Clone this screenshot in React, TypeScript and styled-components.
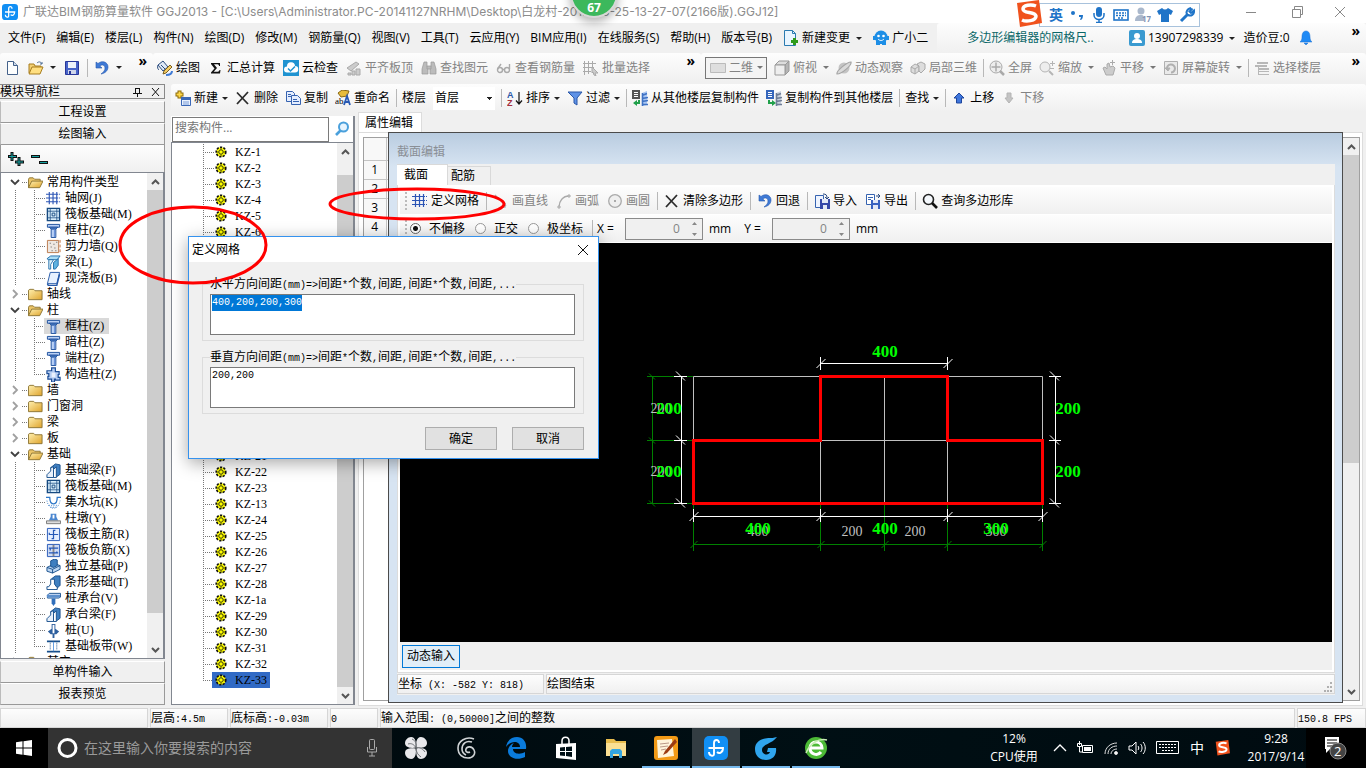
import React, { useEffect, useRef } from 'react';
import styled, { createGlobalStyle, css } from 'styled-components';

const UI = '"Open Sans", "Noto Sans CJK SC", sans-serif';
const SONG = '"Liberation Serif", "Noto Sans CJK SC", serif';
const EDGE = '#828790';

const Global = createGlobalStyle`
  * { box-sizing: border-box; }
  body { margin: 0; overflow: hidden; font: 12px/16px ${UI}; color: #000; }
  button, input, select, textarea { font: inherit; color: inherit; margin: 0; padding: 0; border-radius: 0; }
  button { border: 0; background: none; white-space: nowrap; }
  svg { display: block; flex: none; }
`;

/* ---------- icons ---------- */

const column = (
  <g stroke="#1c4f9c" fill="#b9d0f5"><path d="M1.5 1.5h13v3h-13z" /><path d="M3.5 4.5h9l-2 2h-5z" fill="#6c97dd" /><path d="M5.5 6.5h5v9h-5z" /><path d="M9 7v8" stroke="#5f8ad8" /></g>
);
const raft = (
  <g stroke="#174a80" fill="none"><path d="M1.500 1.500h13v13h-13z" fill="#d8eefb" strokeWidth="1.500" /><path d="M4.500 2v12M11.500 2v12M2 4.500h12M2 11.500h12" strokeWidth=".8" /><path d="M6.500 6.500h3v3h-3z" /></g>
);
const beamFooting = (
  <g stroke="#174f8c"><path d="M5 5l5-4 5 1v10l-4 3z" fill="#3f7fc0" /><path d="M1 15.500v-3l4-4V5l3-1v11.500z" fill="#e8f1fc" /><path d="M8 15.500V7l3-3v11.500z" fill="#fff" /></g>
);

const icons: Record<string, React.ReactNode> = {
  newFile: <><path d="M3.500 1.500h6l4 4v9h-10z" fill="#fdfefe" stroke="#44618a" /><path d="M9.500 1.500v4h4" fill="#cfdcec" stroke="#44618a" /></>,
  open: <><path d="M1 13V4h5l1 2h6v3" fill="#f2cf72" stroke="#a77d1e" /><path d="M1 14l3-7h11l-3 7z" fill="#ffdf80" stroke="#a77d1e" /><path d="M9 3c2-2 4-1 5 1m0-2v2h-2" fill="none" stroke="#4c6c94" /></>,
  save: <><path d="M1.500 1.500h13v13h-13z" fill="#4763c8" stroke="#28369a" /><path d="M4 2h8v6H4z" fill="#eef2fb" /><path d="M4 10h8v4H4z" fill="#cfd6ea" /><path d="M5 11h2v3H5z" fill="#28369a" /></>,
  undo: <path d="M2 2v6h6L5.800 6C8 4 11 5 11 8c0 2-1 4-4 6 5-1 7-4 7-7 0-5-6-7-10-3.500z" fill="#3f7ad6" stroke="#2558ad" strokeWidth=".6" />,
  paint: <><path d="M1 5l5-4 5 6-5 4z" fill="#dfe9f6" stroke="#2b4c7e" /><path d="M4 5l4 4" stroke="#2b4c7e" /><path d="M1 5c-1 3 0 4 1 5" stroke="#2b4c7e" fill="none" /><path d="M13 5l2 2-6 6-3 1 1-3z" fill="#f3cb63" stroke="#7b6020" /><path d="M9 15c3 0 6-1 6-4" stroke="#3f7ad6" fill="none" strokeWidth="2" /></>,
  sigma: <path d="M3 3h9v3h-1c0-1-.5-1.700-1.500-1.700H6L9 8l-3.300 3.700h4c1 0 1.600-.7 1.800-1.700h1l-.5 3.500H3v-1L6.500 8.500 3 4z" fill="#111" />,
  cloud: <><path d="M0 0h16v16H0z" fill="#1f93d1" /><path d="M4 12.500a3 3 0 0 1 0-6 4 4 0 0 1 8-.5 3 3 0 0 1 0 6.500z" fill="#fff" /><path d="M5 8.500l2.500 2.500L12 6.500" stroke="#1f93d1" fill="none" strokeWidth="1.500" /></>,
  align: <g fill="#ccc" stroke="#aaa"><path d="M1 8l9-6 3 2-8 7z" /><path d="M2 13h3v2H2zM6 11h3v4H6zM10 9h4v6h-4z" /></g>,
  binoc: <g fill="#bcbcbc" stroke="#999" strokeWidth=".7"><path d="M3 2h3v4l1 2v6H1V9zM13 2h-3v4L9 8v6h6V9z" /><path d="M6 6h4v3H6z" /></g>,
  glasses: <g fill="none" stroke="#aaa" strokeWidth="1.400"><circle cx="4" cy="10" r="2.500" /><circle cx="11" cy="10" r="2.500" /><path d="M6.500 9.500h2M1.500 9L5 4M13.500 9V4" /></g>,
  batch: <g fill="none" stroke="#aaa"><path d="M1.500 1v14M5.500 1v13M9.500 1v8M0 3.500h13M0 7.500h11M0 11.500h8" /><path d="M9 7l6 6h-3l1 3-2-1-1-3-1 1z" fill="#ccc" /></g>,
  rect: <path d="M.5 3.500h15v9H.5z" fill="#dedede" stroke="#bbb" />,
  cube: <g stroke="#999" fill="#ddd"><path d="M1 5l4-4h10l-4 4z" /><path d="M11 5l4-4v10l-4 4z" fill="#b5b5b5" /><path d="M1 5h10v10H1z" fill="#eee" /></g>,
  orbit: <g><circle cx="8" cy="8" r="5.500" fill="#c4c4c4" /><path d="M1 14c-1-3 10-12 14-12 1 3-9 12-14 12z" fill="#dadada" stroke="#a5a5a5" strokeWidth="1.200" /></g>,
  local3d: <g fill="#ddd" stroke="#aaa"><path d="M1 7l4-3 4 2v5l-4 3-4-2z" /><path d="M7 4l4-2 4 2v5l-4 4-2-2V6z" /><path d="M1 7l4 2 4-3M5 9v5" fill="none" /></g>,
  full: <g fill="none" stroke="#aaa"><circle cx="7" cy="7" r="6" fill="#ededed" /><path d="M7 2.500v9M2.500 7h9" strokeWidth="1.500" /><path d="M11 11l4 4" strokeWidth="2.500" /></g>,
  zoomer: <g fill="none" stroke="#b5b5b5"><circle cx="6" cy="7" r="5" fill="#ededed" /><path d="M10 11l4 4" strokeWidth="2" /><path d="M13.500 1v5M11 3.500h5M11 8.500h4" /></g>,
  hand: <g fill="#ccc" stroke="#aaa"><path d="M2 8l2-1 2 2V4l2-1 1 4 3-1 2 2-2 7H5z" /><path d="M11.500 0v5M9 2.500h5" /></g>,
  rotate: <g fill="none" stroke="#b0b0b0"><path d="M1.500 1.500h13v13h-13z" fill="#eaeaea" /><path d="M4 9a4 4 0 1 1 4 3.500" strokeWidth="2" /><path d="M2 8h5l-2 3z" fill="#b0b0b0" /></g>,
  floors: <path d="M3 2h11v2H3zM1 5h12v2H1zM4 8h11v2H4zM4 11h11v1H4zM4 14h11v1H4zM4 5h1v10H4z" fill="#b8b8b8" />,
  create: <><path d="M4.500.5v8M.5 4.500h8" stroke="#8b6a08" strokeWidth="4" /><path d="M4.500 1.500v6M1.500 4.500h6" stroke="#ffd84a" strokeWidth="2" /><path d="M6.500 7.500h9v8h-9z" fill="#eaf2ff" stroke="#3a68b8" /><path d="M6 7h10v3H6z" fill="#3a68b8" /><path d="M8 12h6M8 14h6" stroke="#7b9cd6" /></>,
  cross: <path d="M2 2.500L13 14M13 2L2 14" stroke="#2c2c2c" strokeWidth="1.800" fill="none" />,
  copy: <g fill="#e5eeff" stroke="#3663b0"><path d="M1.500 1.500h6l2 2v8h-8z" /><path d="M6.500 5.500h6l3 3v6h-9z" /><path d="M8 9.500h4M8 11.500h6M3 4.500h3M3 6.500h3" /></g>,
  rename: <><path d="M3 3l4-3 7 1-2 5-6 1z" fill="#e7bc3c" stroke="#896815" /><text x="0" y="14" fontSize="9" fontFamily="Liberation Serif">ab</text><path d="M9 15l3-9 3 9M10 12h4" stroke="#2859b4" fill="none" strokeWidth="1.800" /></>,
  filter: <path d="M1 2h14L10 8v7l-3-2V8z" fill="#5f92e6" stroke="#2a57a8" />,
  sort: <><text x="0" y="8" fontSize="9" fontWeight="700" fill="#2a57a8" fontFamily="Liberation Sans">A</text><text x="0" y="16" fontSize="9" fontWeight="700" fill="#a12d3c" fontFamily="Liberation Sans">Z</text><path d="M12 2v11M9 10.500l3 3.500 3-3.500" stroke="#111" strokeWidth="1.200" fill="none" /></>,
  fromFloor: <><path d="M0 0h8v9H0z" fill="#555" /><path d="M2 2.500h4M2 4.500h4M2 6.500h4" stroke="#fff" /><path d="M10 3l5-2v14l-5 1z" fill="#a9c6f2" /><path d="M10 5.500l5-2M10 8.500l6-1M10 11.500l6-1M10 14.500h6M10.500 3v13" stroke="#3f72c4" strokeWidth="1.600" fill="none" /><path d="M8 10v4H5v2l-4-3 4-3v2h1v-2z" fill="#20a04a" /></>,
  toFloor: <><path d="M0 0h8v9H0z" fill="#3566bb" /><path d="M2 2.500h4M2 4.500h4M2 6.500h4" stroke="#fff" /><path d="M10 3l5-2v14l-5 1z" fill="#c9d1dd" /><path d="M10 5.500l5-2M10 8.500l6-1M10 11.500l6-1M10 14.500h6M10.500 3v13" stroke="#6d7c96" strokeWidth="1.600" fill="none" /><path d="M2 10h2v2h2v-2l4 3-4 3v-2H2z" fill="#20a04a" /></>,
  up: <path d="M8 3l5 5h-2.500v5h-5V8H3z" fill="#3f76dc" stroke="#1e469c" />,
  down: <path d="M8 13l4-5h-2V3H6v5H4z" fill="#c4c4c4" stroke="#b4b4b4" />,
  change: <><path d="M1.500.5h8l3 3v12h-11z" fill="#e9f5ff" stroke="#2a7ab0" /><path d="M9.500.5v3h3" fill="none" stroke="#2a7ab0" /><path d="M11.500 8v7M8 11.500h7" stroke="#2f9b1b" strokeWidth="3" /></>,
  robot: <><circle cx="8" cy="7" r="6.500" fill="#1d8ee6" /><path d="M0 6h3v4H0zM13 6h3v4h-3zM3 11h10v4H9v-1H7v1H3z" fill="#1d8ee6" /><circle cx="5.500" cy="6" r="1.300" fill="#fff" /><circle cx="10.500" cy="6" r="1.300" fill="#fff" /><path d="M5 9c2 2 4 2 6 0" stroke="#fff" fill="none" /></>,
  user: <><rect width="16" height="16" rx="2" fill="#3a9ad0" /><circle cx="8" cy="6" r="3" fill="#fff" /><path d="M3 13c0-3 2-4 5-4s5 1 5 4z" fill="#fff" /></>,
  bell: <path d="M8 1c-3 0-4 3-4 6s-1 4-2 5h12c-1-1-2-2-2-5s-1-6-4-6zM6 13h4l-2 2z" fill="#1f8af5" stroke="#1b6fd0" strokeWidth=".5" />,
  grid: <path d="M3.500 1v14M7.500 1v14M11.500 1v14M0 3.500h15M0 7.500h15M0 11.500h15" stroke="#2c55b5" strokeWidth="1.200" fill="none" strokeDasharray="13 1 2" />,
  line: <path d="M2 2l11 11M12 10v4h-4" stroke="#aaa" strokeWidth="1.300" fill="none" />,
  arc: <g stroke="#aaa" fill="none"><path d="M3 14C3 8 7 3 13 3" strokeWidth="1.300" /><path d="M2 13h2v2H2zM12 2h2v2h-2z" fill="#ddd" /></g>,
  circle: <><circle cx="8" cy="8" r="6.300" fill="#efefef" stroke="#aaa" strokeWidth="1.300" /><path d="M7 7h2v2H7z" fill="#aaa" /></>,
  importer: <><path d="M1.500 2.500h8v12h-8z" fill="#eef4ff" stroke="#3663b0" /><path d="M6 6h10v10H6z" fill="#3648a8" /><path d="M8 6h6v4H8zM9 12h4v4H9z" fill="#e4e9f7" /><path d="M9 1c3 0 4 1 4 4m-2-1l2 2 2-2" stroke="#27477e" fill="none" /></>,
  exporter: <><path d="M1.500 1.500h8v10h-8z" fill="#fff" stroke="#3663b0" /><path d="M6 7h9v9H6z" fill="#3a62c0" /><path d="M8 7h5v3H8zM8 12h5v4H8z" fill="#e4e9f7" /><path d="M3 4.500h5M3 6.500h3" stroke="#3663b0" /><path d="M11 3h4m-2-2l2 2-2 2" stroke="#27477e" fill="none" /></>,
  find: <><circle cx="6.500" cy="6.500" r="5" fill="#f4f8fc" stroke="#222" strokeWidth="1.600" /><path d="M10 10l5 5" stroke="#111" strokeWidth="2.600" /></>,
  magnify: <><circle cx="9.500" cy="6" r="4.500" fill="#e6f4ff" stroke="#4aa0dc" strokeWidth="2" /><path d="M6.500 9.500L2 14" stroke="#4aa0dc" strokeWidth="2.600" /></>,
  folder: <path d="M.5 13.500v-10L2 2.500h4l1.500 1.500H15v9.500z" fill="url(#gold)" stroke="#8c7434" />,
  folderOpen: <><path d="M.5 13.500v-9l1-1.500h4l1.500 1.500h6v3" fill="#ecc568" stroke="#8c7434" /><path d="M.5 13.500l3.500-7h12l-3.500 7z" fill="url(#gold)" stroke="#8c7434" /></>,
  column, raft, beamFooting,
  wall: <><path d="M1.500 1.500h12v13h-12z" fill="#eee8e2" stroke="#b9784a" /><path d="M4 4h1v1H4zM8 5h1v1H8zM5 8h1v1H5zM9 9h1v1H9zM6 12h1v1H6zM10 12h1v1h-1zM11 3h1v1h-1z" fill="#555" /><path d="M15 1v14" stroke="#c2703c" strokeDasharray="3 2" /></>,
  beam: <g stroke="#2470ac" fill="#a9dcf5"><path d="M1 4l4-3h10l-3 4H3z" /><path d="M3 5h5l-3 5v5H3z" fill="#e3f4fd" /><path d="M8 8l5-4v7l-3 4H8z" fill="#5fb2e0" /></g>,
  slab: <><path d="M4.500 1.500h10l-3 12h-10z" fill="#e7f1ff" stroke="#2458a8" /><path d="M1.500 13.500l1 2h9l3-12" fill="none" stroke="#2458a8" strokeWidth="1.500" /></>,
  gear: <><path d="M6 1h4v4h4v3h-1v3h2v3h-5v-1H9v3H6v-3H2v-3h1V7H1V4h5z" fill="#b6cdf2" stroke="#1e4f98" strokeWidth="1.300" /><path d="M6 6h4v5H6z" fill="#e9f1fd" /></>,
  sump: <g fill="none" stroke="#2f78c8"><path d="M0 2.500h4c0 5 1 7 4 7s4-2 4-7h4" strokeWidth="1.400" /><path d="M1 6c1 5 3 8 7 8s6-3 7-8M3 11h10M5 13h6" strokeDasharray="1 1.500" /></g>,
  pier: <><path d="M5 6V3h6v3l2 4H3z" fill="#4a86cf" /><path d="M7 4h2v4H7z" fill="#fff" /><path d="M.5 10.500h15v3H.5z" fill="#ddd" stroke="#777" /></>,
  rebar: <g fill="none" stroke="#2458b8"><path d="M1.500 1.500h13v13h-13z" fill="#e3edff" /><path d="M8 3v10M3 8h10M8 3.500h2M8 12.500H6M3.500 8V6" strokeWidth="1.300" /></g>,
  rebarNeg: <g fill="none" stroke="#2458b8"><path d="M1.500 1.500h13v13h-13z" fill="#cfdcf4" /><path d="M8 2v12" stroke="#888" strokeWidth="2" /><path d="M3 5.500h10M3 10.500h10M4.500 6v2M11.500 11V9" strokeWidth="1.300" /></g>,
  isolated: <g stroke="#174f8c"><path d="M1 9l8-4 6 2v4l-8 4-6-2z" fill="#bcd6f2" /><path d="M1 9l6 2 8-4M7 11v4" fill="none" /><path d="M5 2l4-2 3 1v6l-4 2-3-1z" fill="#3f7fc0" /></g>,
  strip: <g stroke="#174f8c"><path d="M6 4l4-3h5v10l-4 4z" fill="#3f7fc0" /><path d="M1 15.500v-3h2l2-3V4.500h4v5l2 3h1v3z" fill="#fff" /></g>,
  cap: <><path d="M1.500 4.500l2-2h12v4l-2 1h-12z" fill="#dbe9fb" stroke="#174f8c" /><path d="M1 4h14v3H1z" fill="#5c8fcd" /><path d="M6 8h4v5l-2 3-2-3z" fill="#2f6ebb" /></>,
  pile: <><path d="M6 1h4v5l4 3-3 3H9v4H7v-4H5L2 9l4-3z" fill="#2d5f9e" /><path d="M7 2h2v9H7z" fill="#fff" /></>,
  band: <g fill="none" stroke="#174f8c"><path d="M1 2.500h14M1 13.500h14" strokeWidth="1.800" /><path d="M4.500 4v8M11.500 4v8" strokeDasharray="1 1" /><path d="M8 3v10" stroke="#5d9ae0" /></g>,
  kz: <g><circle cx="8" cy="8" r="4.800" fill="#ff0" stroke="#111" strokeWidth="1.600" strokeDasharray="2.200 1.300" /><circle cx="8" cy="8" r="2.200" fill="none" stroke="#111" strokeWidth=".8" /><path d="M8 3.500v2M8 10.500v2M3.500 8h2M10.500 8h2" stroke="#111" strokeWidth=".8" /></g>,
};

const Icon = ({ name, size = 16 }: { name: string; size?: number }) => (
  <svg width={size} height={size} viewBox="0 0 16 16" aria-hidden="true">{icons[name]}</svg>
);

/* ---------- shared text ---------- */

const Half = styled.span`font: 10px/16px "Liberation Mono", monospace;`;
/* Full-width characters take 12px cells, half-width ones 6px cells. */
const Cells = ({ text }: { text: string }) => (
  <>{text.split(/([\x20-\x7e]+)/).map((p, i) => (i % 2 ? <Half key={i}>{p}</Half> : p))}</>
);

/* ---------- frame ---------- */

const Page = styled.div`
  position: relative; display: flex; flex-direction: column; height: 100vh; min-width: 1024px;
  background: #f0f0f0; overflow: hidden;
`;
const TitleBar = styled.header`
  display: flex; align-items: center; gap: 5px; height: 23px; padding-left: 2px; background: #fff; color: #8c8c8c; white-space: pre;
  font-family: Inter, "Noto Sans CJK SC", sans-serif;
`;
const WinControls = styled.div`display: flex; gap: 28px; margin-left: auto; padding-right: 20px;`;
const Bars = styled.div`display: flex; flex-direction: column;`;
const Strip = styled.div<{ $h: number }>`display: flex; height: ${p => p.$h}px; white-space: nowrap;`;
const Group = styled.div<{ $w?: number; $flat?: boolean; $gap?: number }>`
  display: flex; align-items: center; gap: ${p => p.$gap ?? 8}px; padding: 0 5px 0 4px;
  ${p => (p.$w ? css`flex: 0 0 ${p.$w}px; width: ${p.$w}px;` : css`flex: 1; min-width: 0;`)}
  background: ${p => (p.$flat ? 'none' : 'linear-gradient(#fdfdfd, #f0f0f0)')};
  border-radius: 3px;
`;
const MenuGroup = styled(Group)`padding-left: 8px;`;
const MenuItem = styled.button`height: 20px;`;
const ToolButton = styled.button<{ $gray?: boolean }>`
  display: flex; align-items: center; gap: 3px; height: 22px; flex: none; color: ${p => (p.$gray ? '#838383' : '#000')};
`;
const Arrow = styled.i<{ $near?: boolean; $gray?: boolean }>`
  flex: none; margin-left: ${p => (p.$near ? 1 : 3)}px; border: 3px solid transparent; border-top-color: ${p => (p.$gray ? '#777' : '#222')}; border-bottom: 0;
`;
const Sep = styled.i`flex: none; width: 1px; height: 18px; margin: 0 -2px 0 -1px; background: #b8b8b8;`;
const More = styled.button`align-self: flex-start; height: 16px; padding: 0 1px; margin-left: auto; font-weight: 700; font-size: 14px; line-height: 14px;`;
const Notice = styled.a`flex: 1; text-align: center; color: #0b6768; text-decoration: none;`;
const ViewPick = styled(ToolButton)`border: 1px solid #777; padding: 0 4px; width: 62px; background: #f4f4f4;`;
const Combo = styled.select`
  appearance: none; width: 62px; height: 23px; border: 0; padding-left: 2px; color: #000;
  background: linear-gradient(#222, #222) no-repeat 54px 10px / 5px 1px, linear-gradient(#222, #222) no-repeat 55px 11px / 3px 1px,
    linear-gradient(#222, #222) no-repeat 56px 12px / 1px 1px, #fff;
`;

type ToolProps = { icon?: string; label?: string; gray?: boolean; arrow?: boolean | 'near'; title?: string };
const Tool = ({ icon, label, gray, arrow, title }: ToolProps) => (
  <ToolButton type="button" $gray={gray} title={title} aria-label={label ?? title}>
    {icon && <Icon name={icon} />}{label}{arrow && <Arrow $near={arrow === 'near'} $gray={gray} />}
  </ToolButton>
);

const Body = styled.main`display: flex; flex: 1; gap: 6px; min-height: 0; padding-top: 2px;`;

/* ---------- navigation column ---------- */

const Nav = styled.aside`display: flex; flex-direction: column; flex: 0 0 165px; padding-bottom: 1px;`;
const NavHead = styled.div`
  display: flex; align-items: center; justify-content: space-between; height: 15px; margin-bottom: 2px; padding-right: 4px;
  border: 1px solid #888; border-left: 0;
`;
const NavTools = styled.div`display: flex; gap: 9px;`;
const NavButton = styled.button`
  flex: none; height: 22px; border: 1px solid #999; border-top-color: #fff; border-left-color: #bbb; background: #f0f0f0; text-align: center;
`;
const NavBar = styled.div`
  display: flex; align-items: center; gap: 7px; height: 27px; padding-left: 6px;
  border: 1px solid #999; border-width: 0 1px; background: linear-gradient(#fdfdfd, #f0f0f0);
`;
const TreeBox = styled.div`display: flex; flex: 1; min-height: 0; border: 1px solid ${EDGE}; border-right-width: 2px; background: #fff;`;
const NavTree = styled(TreeBox)`margin-bottom: 2px;`;
const TreeList = styled.ul`flex: 1; min-width: 0; margin: 0; padding: 1px 0 0; list-style: none; overflow: hidden; font-family: ${SONG}; white-space: nowrap;`;

const dotsV = 'repeating-linear-gradient(#777 0 1px, transparent 1px 2px)';
const dotsH = 'repeating-linear-gradient(90deg, #777 0 1px, transparent 1px 2px)';

const FolderRow = styled.li`
  display: flex; align-items: center; gap: 4px; height: 16px; padding-left: 9px;
  background: ${dotsH} no-repeat 21px 8px / 5px 1px;
`;
const LeafRow = styled.li<{ $last?: boolean }>`
  display: flex; align-items: center; height: 16px; padding-left: 43px;
  background: ${dotsV} no-repeat 14px 0 / 1px 16px, ${dotsV} no-repeat 33px 0 / 1px ${p => (p.$last ? 8 : 16)}px,
    ${dotsH} no-repeat 33px 8px / 11px 1px;
`;
const LeafLabel = styled.span<{ $on?: boolean }>`
  display: flex; align-items: center; gap: 4px; height: 16px; padding: 0 5px 0 2px; background: ${p => (p.$on ? '#d9d9d9' : 'none')};
`;
const Chevron = ({ open }: { open: boolean }) => (
  <svg width="10" height="10" viewBox="0 0 10 10">
    <path d={open ? 'M1 3l4 4 4-4' : 'M3 1l4 4-4 4'} fill="none" stroke={open ? '#404040' : '#a0a0a0'} strokeWidth="1.800" />
  </svg>
);

const ScrollTrack = styled.div`display: flex; flex-direction: column; flex: none; width: 16px; margin-left: auto; background: #f0f0f0;`;
const ScrollArrow = styled.button`display: grid; place-items: center; flex: none; width: 100%; height: 17px;`;
const Thumb = styled.div<{ $before: number; $after: number }>`flex: 1; margin: ${p => p.$before}px 0 ${p => p.$after}px; background: #cdcdcd;`;
const Scroll = ({ before = 0, after = 0 }: { before?: number; after?: number }) => (
  <ScrollTrack>
    <ScrollArrow aria-label="上"><svg width="9" height="6"><path d="M1 5l3.500-3.500L8 5" fill="none" stroke="#555" strokeWidth="2" /></svg></ScrollArrow>
    <Thumb $before={before} $after={after} />
    <ScrollArrow aria-label="下"><svg width="9" height="6"><path d="M1 1l3.500 3.500L8 1" fill="none" stroke="#555" strokeWidth="2" /></svg></ScrollArrow>
  </ScrollTrack>
);

type Leaf = [icon: string, label: string, on?: boolean];
const tree: { label: string; leaves?: Leaf[] }[] = [
  { label: '常用构件类型', leaves: [['grid', '轴网(J)'], ['raft', '筏板基础(M)'], ['column', '框柱(Z)'], ['wall', '剪力墙(Q)'], ['beam', '梁(L)'], ['slab', '现浇板(B)']] },
  { label: '轴线' },
  { label: '柱', leaves: [['column', '框柱(Z)', true], ['column', '暗柱(Z)'], ['column', '端柱(Z)'], ['gear', '构造柱(Z)']] },
  { label: '墙' }, { label: '门窗洞' }, { label: '梁' }, { label: '板' },
  {
    label: '基础',
    leaves: [['beamFooting', '基础梁(F)'], ['raft', '筏板基础(M)'], ['sump', '集水坑(K)'], ['pier', '柱墩(Y)'], ['rebar', '筏板主筋(R)'], ['rebarNeg', '筏板负筋(X)'],
      ['isolated', '独立基础(P)'], ['strip', '条形基础(T)'], ['cap', '桩承台(V)'], ['beamFooting', '承台梁(F)'], ['pile', '桩(U)'], ['band', '基础板带(W)']],
  },
  { label: '其它' },
];

const Navigation = () => (
  <Nav>
    <NavHead>模块导航栏
      <NavTools>
        <svg width="9" height="10" fill="none" stroke="#111"><path d="M2.500 1v5M6.500 1v5M2 1.500h5M0 6.500h9M4.500 7v3" /></svg>
        <svg width="9" height="10" stroke="#111"><path d="M1 1l7 8M8 1L1 9" /></svg>
      </NavTools>
    </NavHead>
    <NavButton>工程设置</NavButton>
    <NavButton>绘图输入</NavButton>
    <NavBar>
      <svg width="17" height="16" fill="none"><path d="M5 1v9M1 5.500h9M12 6v9M8 11h9" stroke="#111" strokeWidth="3" /><path d="M5 2v7M2 5.500h7M12 7v7M9 11h7" stroke="#14a0a0" strokeWidth="1" /></svg>
      <svg width="17" height="16"><path d="M0 4h9v3H0zM8 10h9v3H8z" fill="#111" /><path d="M1 5h7v1H1zM9 11h7v1H9z" fill="#14a0a0" /></svg>
    </NavBar>
    <NavTree>
      <TreeList>
        {tree.map(n => (
          <React.Fragment key={n.label}>
            <FolderRow><Chevron open={!!n.leaves} /><span /><Icon name={n.leaves ? 'folderOpen' : 'folder'} size={15} />{n.label}</FolderRow>
            {n.leaves?.map(([icon, label, on], i) => (
              <LeafRow key={label} $last={i === n.leaves!.length - 1}>
                <LeafLabel $on={on}><Icon name={icon} size={15} />{label}</LeafLabel>
              </LeafRow>
            ))}
          </React.Fragment>
        ))}
      </TreeList>
      <Scroll after={28} />
    </NavTree>
    <NavButton>单构件输入</NavButton>
    <NavButton>报表预览</NavButton>
  </Nav>
);

/* ---------- component list ---------- */

const Work = styled.section`display: flex; flex-direction: column; flex: 1; min-width: 0;`;
const Split = styled.div`display: flex; flex: 1; gap: 3px; min-height: 0;`;
const ListPanel = styled.div`display: flex; flex-direction: column; flex: 0 0 184px; padding: 4px 0 1px;`;
const SearchRow = styled.div`display: flex; align-items: center; gap: 5px; height: 26px; padding-left: 1px; border-right: 2px solid ${EDGE}; background: #fff;`;
const SearchInput = styled.input`width: 157px; height: 25px; padding: 0 2px 4px; border: 1px solid #7a7a7a; background: #fff; outline: 0; &::placeholder { color: #767676; }`;
const KzRow = styled.li<{ $last?: boolean }>`
  display: flex; height: 16px; padding-left: 40px;
  background: ${dotsV} no-repeat 31px 0 / 1px ${p => (p.$last ? 8 : 16)}px, ${dotsH} no-repeat 31px 8px / 11px 1px;
`;
const KzLabel = styled.span<{ $on?: boolean }>`display: flex; gap: 6px; padding: 0 3px 0 1px; background: ${p => (p.$on ? '#316ac5' : 'none')};`;

const kz = ['1', '2', '3', '4', '5', '6', '7', '8', '9', '10', '11', '12', '14', '15', '16', '17', '18', '19', '20', '21', '22', '23', '13', '24', '25', '26', '27', '28', '1a', '29', '30', '31', '32', '33'];

/* ---------- property pane and section window ---------- */

const PropPane = styled.div`position: relative; display: flex; flex-direction: column; flex: 1; min-width: 0; margin-right: 3px;`;
const PropTab = styled.div`width: 64px; height: 20px; padding: 2px 6px 0; border: 1px solid #dcdcdc; border-bottom: 0; background: #fff; white-space: nowrap;`;
const PropBody = styled.div`display: flex; flex: 1; padding: 4px 2px 4px 4px; min-height: 0; border: 1px solid #dcdcdc; background: #fff;`;
const PropFrame = styled.div`display: flex; flex: 1; border: 1px solid #a0a0a0;`;
const RowTable = styled.table`
  align-self: flex-start; border-collapse: collapse; font-family: ${UI};
  th { width: 22px; height: 19px; padding: 0; border: 1px solid #c4c4c4; border-width: 0 1px 1px 0; background: #f8f8f8; font-weight: 400; }
  thead th { height: 22px; }
  td { width: 300px; border-bottom: 1px solid #d0d0d0; }
`;
const Child = styled.section`
  position: absolute; inset: 20px 20px 3px 30px; display: flex; flex-direction: column; padding: 0 7px 7px 8px;
  border: 1px solid #4b4b4b; background: linear-gradient(#b9cce0, #d7e4f2 34px);
`;
const ChildTitle = styled.h2`height: 31px; margin: 0; padding-top: 11px; font: 12px/16px ${UI}; color: #8a8f96;`;
const Tabs = styled.div`display: flex; align-items: flex-end; height: 21px; background: #f0f0f0;`;
const Tab = styled.button<{ $on?: boolean }>`
  width: ${p => (p.$on ? 51 : 43)}px; height: ${p => (p.$on ? 21 : 19)}px; border: 1px solid #d9d9d9; border-bottom: 0; border-left: 0; text-align: left;
  background: ${p => (p.$on ? '#fff' : '#f0f0f0')};
  padding: 0 0 1px ${p => (p.$on ? 7 : 3)}px;
`;
const TabPage = styled.div`display: flex; flex-direction: column; flex: 1; min-height: 0; padding: 2px; border: 1px solid #dcdcdc; border-top: 0; background: #fff;`;
const ChildBar = styled.div<{ $gap?: number }>`
  display: flex; align-items: center; gap: ${p => p.$gap ?? 8}px; flex: none; height: 27px; padding-left: 5px; margin-bottom: 1px;
  background: linear-gradient(#fdfdfd, #f0f0f0); white-space: nowrap;
`;
const Grip = styled.i`flex: none; width: 2px; height: 18px; margin-right: -3px; background: repeating-linear-gradient(#bbb 0 2px, transparent 2px 4px);`;
const Choice = styled.label`display: flex; align-items: center; gap: 8px; margin-right: 4px;`;
const Radio = styled.input`
  appearance: none; width: 11px; height: 11px; border: 1px solid #666; border-radius: 50%; background: #fff;
  &:checked { background: radial-gradient(#111 0 2px, #fff 3px); }
  &:not(:checked) { border-color: #999; }
`;
const Measure = styled.label`display: flex; align-items: center; gap: 6px; margin-right: 7px;`;
const MeasureName = styled.span`padding-right: 5px;`;
const Spin = styled.span`display: flex; align-items: center; width: 78px; height: 22px; padding-right: 4px; border: 1px solid #8a8a8a; background: #f0f0f0;`;
const SpinInput = styled.input`flex: 1; width: 0; padding-right: 11px; border: 0; background: none; color: #848484; text-align: right; outline: 0;`;
const Canvas = styled.div`flex: 1; min-height: 0; overflow: hidden; background: #000;`;
const Footer = styled.div`display: flex; align-items: center; flex: none; height: 28px; padding-left: 2px; background: #f0f0f0;`;
const DynButton = styled.button`width: 58px; height: 23px; border: 1px solid #0078d7; background: #e1eef8;`;
const ChildStatus = styled.div`display: flex; gap: 2px; height: 22px; padding-top: 1px; background: #f0f0f0;`;
const Cell = styled.div<{ $w?: number }>`
  ${p => (p.$w ? css`flex: 0 0 ${p.$w}px;` : css`flex: 1;`)} height: 20px; padding: 1px 0; overflow: hidden;
  border: 1px solid #d6d6d6; background: linear-gradient(#fdfdfd, #f0f0f0); white-space: pre;
`;
const Resize = styled.svg`margin-left: auto;`;
const CellRow = styled.div`display: flex;`;

const Big = styled.text`font: 700 17px "Liberation Serif", serif; fill: #0f0; text-anchor: middle;`;
const Small = styled.text`font: 14px "Liberation Serif", serif; fill: #c0c0c0; text-anchor: middle;`;

const xs = [693.5, 820.5, 884.5, 947.5, 1042.5];
const ys = [376.5, 440.5, 503.5];
const whiteX = [693.5, 820.5, 947.5, 1042.5];

const Drawing = () => (
  <svg width="932" height="399" viewBox="400 243 932 399" fill="none">
    <g stroke="#c0c0c0">
      <path d="M693.500 376.500H1042.500V503.500H693.500zM820.500 376v128M884.500 376v128M947.500 376v128M693 440.500h350" />
    </g>
    <g stroke="#008000">
      <path d="M652.500 376v128M693 544.500h350" />
      {ys.map(y => <path key={y} d={`M647 ${y}H693M649 ${y - 3}l6 6`} />)}
      {xs.map(x => <path key={x} d={`M${x} 504V551M${x - 3} 548l7-7`} />)}
    </g>
    <Small x="661" y="413">200</Small><Small x="661" y="476">200</Small>
    <Small x="758" y="536">400</Small><Small x="852" y="536">200</Small><Small x="915" y="536">200</Small><Small x="996" y="536">300</Small>
    <g stroke="#fff">
      <path d="M681.500 376v128M1055.500 376v128M693 516.500h350M820 363.500h128" />
      {ys.map(y => <path key={y} d={`M674 ${y}h13M676 ${y - 5}l9 9M1049 ${y}h12M1050 ${y - 5}l9 9`} />)}
      {whiteX.map(x => <path key={x} d={`M${x} 509v13M${x - 4} 521l9-9`} />)}
      {[820.5, 947.5].map(x => <path key={x} d={`M${x} 357v13M${x - 4} 368l9-9`} />)}
    </g>
    <path d="M820.500 376.500H947.500V440.500H1042.500V503.500H693.500V440.500H820.500z" stroke="#f00" strokeWidth="3" />
    <Big x="885" y="357">400</Big>
    <Big x="669" y="414">200</Big><Big x="669" y="477">200</Big><Big x="1068" y="414">200</Big><Big x="1068" y="477">200</Big>
    <Big x="758" y="534">400</Big><Big x="885" y="534">400</Big><Big x="996" y="534">300</Big>
  </svg>
);

const SpinBox = ({ label }: { label: string }) => (
  <Measure><MeasureName>{label}</MeasureName>
    <Spin><SpinInput defaultValue="0" aria-label={label} />
      <svg width="7" height="16" fill="#888"><path d="M1 4L3.500 1 6 4zM1 12l2.500 3L6 12z" /></svg>
    </Spin>mm
  </Measure>
);

const SectionWindow = () => (
  <Child>
    <ChildTitle>截面编辑</ChildTitle>
    <Tabs><Tab $on>截面</Tab><Tab>配筋</Tab></Tabs>
    <TabPage>
      <ChildBar>
        <Grip /><Tool icon="grid" label="定义网格" /><Sep />
        <Tool icon="line" label="画直线" gray /><Tool icon="arc" label="画弧" gray /><Tool icon="circle" label="画圆" gray /><Sep />
        <Tool icon="cross" label="清除多边形" /><Sep /><Tool icon="undo" label="回退" /><Sep />
        <Tool icon="importer" label="导入" /><Tool icon="exporter" label="导出" /><Sep /><Tool icon="find" label="查询多边形库" />
      </ChildBar>
      <ChildBar $gap={6}>
        <Grip />
        <Choice><Radio type="radio" name="offset" defaultChecked />不偏移</Choice>
        <Choice><Radio type="radio" name="offset" />正交</Choice>
        <Choice><Radio type="radio" name="offset" />极坐标</Choice>
        <Sep /><SpinBox label="X =" /><SpinBox label="Y =" />
      </ChildBar>
      <Canvas><Drawing /></Canvas>
      <Footer><DynButton>动态输入</DynButton></Footer>
    </TabPage>
    <ChildStatus>
      <Cell $w={147}><Cells text="坐标 (X: -582 Y: 818)" /></Cell>
      <Cell><CellRow>绘图结束
        <Resize width="10" height="17" fill="#b0b0b0"><path d="M6 6h2v2H6zM3 10h2v2H3zM6 10h2v2H6zM0 14h2v2H0zM3 14h2v2H3zM6 14h2v2H6z" /></Resize>
      </CellRow></Cell>
    </ChildStatus>
  </Child>
);

/* ---------- grid dialog ---------- */

const Dialog = styled.form`
  position: absolute; top: 236px; left: 188px; width: 411px; border: 1px solid #3592ee; background: #f0f0f0;
  box-shadow: 0 4px 16px rgba(0, 0, 0, .35);
`;
const DialogHead = styled.div`display: flex; align-items: center; justify-content: space-between; height: 25px; padding: 0 9px 0 3px; background: #fff;`;
const DialogBody = styled.div`display: flex; flex-direction: column; gap: 8px; padding: 14px 14px 8px 13px;`;
const Field = styled.fieldset`
  height: 65px; margin: 0; padding: 0 8px 0 7px; border: 1px solid #dcdcdc; min-width: 0;
  legend { height: 16px; padding: 0; white-space: nowrap; }
`;
const Area = styled.textarea`
  display: block; width: 100%; height: 41px; margin-top: 2px; padding: 0 1px; border: 1px solid #7a7a7a; background: #fff;
  resize: none; outline: 0; font: 10px/16px "Liberation Mono", monospace;
  &::selection { background: #0078d7; color: #fff; }
`;
const Buttons = styled.div`display: flex; justify-content: flex-end; gap: 15px; margin-top: 5px;`;
const PushButton = styled.button`width: 72px; height: 23px; border: 1px solid #adadad; background: #e1e1e1;`;

const GridDialog = () => {
  const first = useRef<HTMLTextAreaElement>(null);
  useEffect(() => { first.current?.focus(); first.current?.select(); }, []);
  const hint = '方向间距(mm)=>间距*个数,间距,间距*个数,间距,...';
  return (
    <Dialog onSubmit={e => e.preventDefault()}>
      <DialogHead>定义网格
        <button type="button" aria-label="关闭"><svg width="12" height="12" stroke="#111"><path d="M1 1l10 10M11 1L1 11" /></svg></button>
      </DialogHead>
      <DialogBody>
        <Field><legend><Cells text={'水平' + hint} /></legend><Area ref={first} defaultValue="400,200,200,300" aria-label="水平方向间距" spellCheck={false} /></Field>
        <Field><legend><Cells text={'垂直' + hint} /></legend><Area defaultValue="200,200" aria-label="垂直方向间距" spellCheck={false} /></Field>
        <Buttons><PushButton type="submit">确定</PushButton><PushButton type="button">取消</PushButton></Buttons>
      </DialogBody>
    </Dialog>
  );
};

/* ---------- status bar, taskbar ---------- */

const Status = styled.footer`display: flex; flex: none; gap: 2px; height: 22px; padding-top: 2px;`;
const Taskbar = styled.nav`display: flex; flex: none; height: 40px; background: linear-gradient(90deg, #00070b, #000f14 60%, #000b10); color: #fff; white-space: nowrap;`;
const StartButton = styled.button`display: grid; place-items: center; flex: 0 0 48px; background: #000;`;
const CortanaBox = styled.label`display: flex; align-items: center; gap: 6px; flex: 0 0 344px; padding: 0 14px 0 9px; background: #333;`;
const CortanaInput = styled.input`flex: 1; width: 0; border: 0; outline: 0; background: none; font-size: 14px; &::placeholder { color: #9a9a9a; }`;
const Apps = styled.div`display: flex; gap: 2px;`;
const AppButton = styled.button<{ $state?: 'run' | 'on' }>`
  display: grid; place-items: center; width: 48px; background: ${p => (p.$state === 'on' ? '#333d42' : 'none')};
  ${p => p.$state && css`box-shadow: inset 0 -2px #76b9ed;`}
`;
const Tray = styled.div`display: flex; align-items: center; gap: 10px; margin-left: auto;`;
const Stack = styled.div<{ $w: number }>`position: relative; width: ${p => p.$w}px; line-height: 18px; text-align: center;`;
const Lang = styled.span`font-size: 14px;`;
const Notify = styled.button`display: grid; place-items: center; width: 60px; height: 40px; margin-left: -16px; background: #000;`;

const sogou = <><path d="M3 3l22-3 3 23-22 4z" fill="#f0521d" /><path d="M22 6c-5-2-13-1-13 3 0 5 12 2 13 7 0 5-10 6-14 4" fill="none" stroke="#fff" strokeWidth="3.500" /></>;

const apps: { name: string; state?: 'run' | 'on'; art: React.ReactNode }[] = [
  { name: '浏览器', art: <g fill="#e9e9ec"><path d="M11.500 11.500C8 12.500 1 12 1 7c0-3 3-6 6-6 5 0 5 6 4.500 10.500z" /><path d="M12.500 11.500C11.500 8 12 1 17 1c3 0 6 3 6 6 0 5-6 5-10.500 4.500z" /><path d="M12.500 12.500c3.500-1 10.500-.5 10.500 4.500 0 3-3 6-6 6-5 0-5-6-4.500-10.500z" /><path d="M11.500 12.500c1 3.500.5 10.500-4.500 10.500-3 0-6-3-6-6 0-5 6-5 10.500-4.500z" /><path d="M4 8c3-1 6 0 8 4 1-4 0-7-4-9M12 12c4-1 7 1 9 4M12 12c0 4 2 7 5 9" fill="none" stroke="#6d7175" strokeWidth="1" /></g> },
  { name: '助手', art: <g fill="none" stroke="#cfd3d5" strokeWidth="1.600"><path d="M20 3C12 0 4 5 4 12s5 10 10 10 8-4 6-8-7-4-8-1 2 4 4 3" /><path d="M18 6c-6-2-10 2-10 7 0 3 2 5 4 6" /></g> },
  { name: 'Edge', art: <path d="M2 11C3 4 8 1 13 1c6 0 10 5 9 12H9c0 5 7 6 12 3v5C13 25 4 22 4 15c0-4 3-7 6-8-1 1-2 2-2 4h8c0-6-9-7-14 0z" fill="#0a7bdc" /> },
  { name: '应用商店', art: <><path d="M2 8l20-1v17L2 22z" fill="#fff" /><path d="M8 8V5c0-5 7-5 7 0v3" fill="none" stroke="#fff" strokeWidth="1.500" /><path d="M6 11.500l5-.5v4H6zM12 11l6-.5V15h-6zM6 16h5v4l-5-.5zM12 16h6v5l-6-1z" fill="#001016" /></> },
  { name: '文件资源管理器', art: <><path d="M2 3h8l2 2h10v15H2z" fill="#e9bd4e" /><path d="M2 7h20v13H2z" fill="#fbdf92" /><path d="M6 22v-7l2-2h8l2 2v7h-3v-4H9v4z" fill="#35a5e0" /></> },
  { name: '便笺', state: 'run', art: <><rect width="24" height="24" rx="3" fill="#f29a16" /><path d="M3 4l15-1 2 17-16 2z" fill="#fff4da" /><path d="M6 8l9-1M6 11l8-1M7 14l5-1" stroke="#b98" /><path d="M21 3L11 15l-2 4 4-2L23 6z" fill="#9c3b12" /></> },
  { name: 'GGJ2013', state: 'on', art: <><rect width="24" height="24" rx="5" fill="#118ff4" /><path d="M15 7c0-4-5-4-5 0v11c0 3-5 2-5-2M4.500 12H19c0 5-4 6-6 4" fill="none" stroke="#fff" strokeWidth="1.900" /></> },
  { name: '广联达', state: 'run', art: <path d="M23 1c-7 2-8 0-14 2C3 5 1 9 1 13c0 7 5 11 11 11 7 0 11-5 10-12h-8l-1 4h3c-1 4-8 3-8-2 0-6 10-6 15-13z" fill="#2fa5ee" /> },
  { name: '安全浏览器', state: 'run', art: <><circle cx="12" cy="12" r="11" fill="#4cba36" /><path d="M6 12h12c0-8-12-8-12 0 0 7 8 8 11 4" fill="none" stroke="#fff" strokeWidth="3" /><path d="M2 17C6 7 15 2 23 4" stroke="#c8ecb4" strokeWidth="1.500" fill="none" /></> },
];

/* ---------- overlays ---------- */

const ImeBar = styled.div`
  position: absolute; top: 3px; right: 166px; display: flex; align-items: center; gap: 6px; height: 24px; width: 161px; padding-left: 9px;
  border: 1px solid #a8c2dc; background: #fff; color: #1f74c8; font-weight: 700; font-size: 14px;
`;
const ImeLogo = styled.svg`position: absolute; left: -26px; top: -4px;`;
const Bubble = styled.div`
  position: absolute; top: -30px; left: 570px; display: flex; align-items: flex-end; justify-content: center; width: 48px; height: 48px;
  border: 2px solid #d8d8d8; border-radius: 50%; background: #3cb85c; color: #fff; font-weight: 700; box-shadow: 0 4px 10px rgba(0, 0, 0, .3);
`;
const Marks = styled.svg`position: absolute; top: 0; left: 0; pointer-events: none;`;
const Defs = styled.svg`position: absolute;`;

const menus = ['文件(F)', '编辑(E)', '楼层(L)', '构件(N)', '绘图(D)', '修改(M)', '钢筋量(Q)', '视图(V)', '工具(T)', '云应用(Y)', 'BIM应用(I)', '在线服务(S)', '帮助(H)', '版本号(B)'];

export default function App() {
  return (
    <Page>
      <Global />
      <Defs width="0" height="0">
        <defs><linearGradient id="gold" x2="1" y2="1"><stop stopColor="#fff0b0" /><stop offset="1" stopColor="#dfa42c" /></linearGradient></defs>
      </Defs>
      <TitleBar>
        <svg width="16" height="16" viewBox="0 0 24 24">{apps[6].art}</svg>
        <span>广联达BIM钢筋算量软件 GGJ2013 - [C:\Users\Administrator.PC-20141127NRHM\Desktop\白龙村-2017-08-25-13-27-07(2166版).GGJ12]</span>
        <WinControls>
          <svg width="18" height="12" stroke="#888"><path d="M4 6.500h10" /></svg>
          <svg width="18" height="12" stroke="#888" fill="none"><path d="M4.500 3.500h8v8h-8zM6.500 3V.500h8v8H13" /></svg>
          <svg width="12" height="12" stroke="#888"><path d="M1 1l10 10M11 1L1 11" /></svg>
        </WinControls>
      </TitleBar>

      <Bars>
        <Strip $h={30}>
          <MenuGroup $w={937} $flat $gap={11}>
            {menus.map(m => <MenuItem key={m}>{m}</MenuItem>)}
            <Tool icon="change" label="新建变更" arrow /><Tool icon="robot" label="广小二" />
          </MenuGroup>
          <Group $w={188}><Notice href="#">多边形编辑器的网格尺..</Notice></Group>
          <Group><Tool icon="user" label="13907298339" arrow /><span>造价豆:0</span><Tool icon="bell" title="通知" /><More>»</More></Group>
        </Strip>
        <Strip $h={29}>
          <Group $w={153}>
            <Tool icon="newFile" title="新建" /><Tool icon="open" title="打开" arrow /><Tool icon="save" title="保存" /><Sep />
            <Tool icon="undo" title="撤销" arrow /><More>»</More>
          </Group>
          <Group $w={548}>
            <Tool icon="paint" label="绘图" /><Tool icon="sigma" label="汇总计算" /><Tool icon="cloud" label="云检查" />
            <Tool icon="align" label="平齐板顶" gray /><Tool icon="binoc" label="查找图元" gray /><Tool icon="glasses" label="查看钢筋量" gray />
            <Tool icon="batch" label="批量选择" gray /><More>»</More>
          </Group>
          <Group $gap={7}>
            <ViewPick type="button" $gray><Icon name="rect" />二维<Arrow $near $gray /></ViewPick>
            <Tool icon="cube" label="俯视" gray arrow /><Tool icon="orbit" label="动态观察" gray /><Tool icon="local3d" label="局部三维" gray /><Sep />
            <Tool icon="full" label="全屏" gray /><Tool icon="zoomer" label="缩放" gray arrow /><Tool icon="hand" label="平移" gray arrow />
            <Tool icon="rotate" label="屏幕旋转" gray arrow /><Sep /><Tool icon="floors" label="选择楼层" gray /><More>»</More>
          </Group>
        </Strip>
      </Bars>

      <Body>
        <Navigation />
        <Work>
          <Strip $h={28}>
            <Group $gap={7}>
              <Tool icon="create" label="新建" arrow="near" /><Tool icon="cross" label="删除" /><Tool icon="copy" label="复制" /><Tool icon="rename" label="重命名" /><Sep />
              <label htmlFor="floor">楼层</label><Combo id="floor"><option>首层</option></Combo><Sep />
              <Tool icon="sort" label="排序" arrow="near" /><Tool icon="filter" label="过滤" arrow="near" /><Sep />
              <Tool icon="fromFloor" label="从其他楼层复制构件" /><Tool icon="toFloor" label="复制构件到其他楼层" /><Sep />
              <Tool label="查找" arrow="near" /><Sep /><Tool icon="up" label="上移" /><Tool icon="down" label="下移" gray />
            </Group>
          </Strip>
          <Split>
            <ListPanel>
              <SearchRow><SearchInput placeholder="搜索构件..." aria-label="搜索构件" /><button aria-label="搜索"><Icon name="magnify" /></button></SearchRow>
              <TreeBox>
                <TreeList>
                  {kz.map((k, i) => (
                    <KzRow key={k} $last={i === kz.length - 1}>
                      <KzLabel $on={k === '33'}><Icon name="kz" />KZ-{k}</KzLabel>
                    </KzRow>
                  ))}
                </TreeList>
                <Scroll before={15} />
              </TreeBox>
            </ListPanel>
            <PropPane>
              <PropTab>属性编辑</PropTab>
              <PropBody>
                <PropFrame>
                  <RowTable>
                    <thead><tr><th /><th /></tr></thead>
                    <tbody>{[1, 2, 3, 4].map(n => <tr key={n}><th>{n}</th><td /></tr>)}</tbody>
                  </RowTable>
                  <Scroll after={220} />
                </PropFrame>
              </PropBody>
              <SectionWindow />
            </PropPane>
          </Split>
        </Work>
      </Body>

      <Status>
        <Cell $w={148} />
        <Cell $w={78}><Cells text="层高:4.5m" /></Cell>
        <Cell $w={98}><Cells text="底标高:-0.03m" /></Cell>
        <Cell $w={48}><Cells text="0" /></Cell>
        <Cell><Cells text="输入范围: (0,50000]之间的整数" /></Cell>
        <Cell $w={69}><Cells text="150.8 FPS" /></Cell>
      </Status>

      <Taskbar>
        <StartButton aria-label="开始"><svg width="16" height="16" fill="#fff"><path d="M0 2.200L6.500 1.300V7.500H0zM7.500 1.200L16 0v7.500H7.500zM0 8.500h6.500v6.200L0 13.800zM7.500 8.500H16V16l-8.500-1.200z" /></svg></StartButton>
        <CortanaBox>
          <svg width="21" height="22"><circle cx="10.500" cy="11" r="8.500" fill="none" stroke="#fff" strokeWidth="3" /></svg>
          <CortanaInput placeholder="在这里输入你要搜索的内容" aria-label="搜索" />
          <svg width="12" height="18" fill="none" stroke="#aaa"><rect x="3.500" y=".5" width="5" height="10" rx="1" /><path d="M1.500 8v5h9V8M6 13v4M3 17h6" /></svg>
        </CortanaBox>
        <Apps>
          {apps.map(a => <AppButton key={a.name} $state={a.state} aria-label={a.name}><svg width="24" height="24" viewBox="0 0 24 24">{a.art}</svg></AppButton>)}
        </Apps>
        <Tray>
          <Stack $w={58}>12%<br />CPU使用</Stack>
          <svg width="14" height="10" fill="none" stroke="#fff" strokeWidth="1.300"><path d="M1 8l6-6 6 6" /></svg>
          <svg width="17" height="14" fill="none" stroke="#fff"><path d="M5.500 4.500h10v7h-10zM2.500 0v4M.5 2.500h4v3h-4zM2.500 6v5h3" /><path d="M7 6h7v4H7z" fill="#fff" stroke="none" /></svg>
          <svg width="14" height="14" fill="none" stroke="#ddd"><path d="M1 13C1 7 6 2 13 2M4 13c0-5 4-8 9-8M7 13c0-3 3-5 6-5" /><circle cx="12" cy="12" r="1.500" fill="#fff" /></svg>
          <svg width="18" height="14" fill="none" stroke="#fff"><path d="M1 5h3l4-4v12L4 9H1zM10 5c1 1 1 3 0 4M12.500 3c2 2 2 6 0 8M15 1c3 3 3 9 0 12" /></svg>
          <svg width="24" height="14" fill="none" stroke="#fff"><path d="M.5 .5h22v12H.5z" /><path d="M3 3.500h18M3 6.500h18M6 9.500h12" strokeDasharray="2 1" /></svg>
          <Lang>中</Lang>
          <svg width="16" height="16" viewBox="0 0 28 28">{sogou}</svg>
          <Stack $w={72}>9:28<br />2017/9/14</Stack>
          <Notify aria-label="通知"><svg width="28" height="26"><path d="M3 2h14v12H8l-4 4v-4H3z" fill="#fff" /><path d="M5 5h10M5 8h10M5 11h7" stroke="#000" /><circle cx="16" cy="16" r="8" fill="#444" stroke="#888" /><text x="12" y="21" fontSize="13" fill="#fff" fontFamily="Open Sans">2</text></svg></Notify>
        </Tray>
      </Taskbar>

      <ImeBar>
        <ImeLogo width="29" height="28">{sogou}</ImeLogo>英
        <svg width="16" height="16" fill="#1f74c8"><circle cx="4" cy="6" r="2" /><path d="M10 8h4c0 3-1 5-3 5l1-3h-2z" /></svg>
        <svg width="16" height="16" fill="#1f74c8"><rect x="5" y="0" width="6" height="10" rx="3" /><path d="M3 6v2c0 6 10 6 10 0V6M8 12v3M5 15.500h6" fill="none" stroke="#1f74c8" strokeWidth="1.500" /></svg>
        <svg width="16" height="16" fill="none" stroke="#1f74c8"><rect x="1" y="3" width="14" height="10" strokeWidth="1.600" /><path d="M3 6h10M3 8.500h10M5 11h6" strokeDasharray="2 1" strokeWidth="1.400" /></svg>
        <svg width="16" height="16" fill="#aab8cc"><circle cx="6" cy="4" r="3.500" /><path d="M0 14c0-5 3-6 6-6s3 1 3 6z" /><text x="7" y="15" fontSize="8" fill="#7f93b4" fontFamily="Open Sans">17</text></svg>
        <svg width="16" height="16" fill="#1f74c8"><path d="M5 1c2 2 4 2 6 0l5 3-2 4-2-1v8H4V7L2 8 0 4z" /></svg>
        <svg width="16" height="16" fill="none" stroke="#1f74c8"><path d="M2 14l7-7" strokeWidth="3" /><path d="M13.500 1.500l-3 3 1.500 1.500 3-2.500c.5 4-3 6-6 4.500S8 1.500 12 1" strokeWidth="2" /></svg>
      </ImeBar>
      <Bubble>67</Bubble>
      <GridDialog />
      <Marks width="620" height="320" fill="none" stroke="#f00" strokeWidth="3">
        <ellipse cx="193" cy="245" rx="73" ry="38" /><ellipse cx="417" cy="204" rx="87" ry="15" />
      </Marks>
    </Page>
  );
}
